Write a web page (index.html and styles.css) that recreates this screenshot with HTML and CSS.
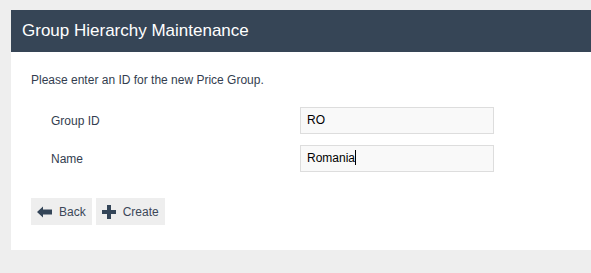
FILE: index.html
```html
<!DOCTYPE html>
<html>
<head>
<meta charset="utf-8">
<link rel="stylesheet" href="styles.css">
</head>
<body>
<div class="panel">
  <div class="panel-header">Group Hierarchy Maintenance</div>
  <div class="panel-body">
    <p class="intro">Please enter an ID for the new Price Group.</p>
    <div class="form">
      <div class="row">
        <label class="label">Group ID</label>
        <div class="field">RO</div>
      </div>
      <div class="row">
        <label class="label">Name</label>
        <div class="field">Romania<span class="caret"></span></div>
      </div>
    </div>
    <div class="buttons">
      <button class="btn">
        <svg class="icon" width="15" height="14" viewBox="0 0 15 14"><path d="M0 7 L6 1.5 L6 4.5 L15 4.5 L15 9.5 L6 9.5 L6 12.5 Z" fill="#344558"/></svg>
        <span>Back</span>
      </button>
      <button class="btn">
        <svg class="icon" width="14" height="14" viewBox="0 0 14 14"><path d="M5 0 H9 V5 H14 V9 H9 V14 H5 V9 H0 V5 H5 Z" fill="#344558"/></svg>
        <span>Create</span>
      </button>
    </div>
  </div>
</div>
</body>
</html>
```
FILE: styles.css
```css
html, body {
  margin: 0;
  padding: 0;
  background: #eeeeee;
  font-family: "Liberation Sans", Arial, sans-serif;
}
body {
  padding: 10px 0 0 11px;
}
.panel {
  background: #ffffff;
  height: 240px;
}
.panel-header {
  background: #364556;
  color: #ffffff;
  font-size: 17px;
  height: 42px;
  line-height: 41px;
  padding-left: 11px;
}
.panel-body {
  padding: 0 20px;
}
.intro {
  margin: 0;
  padding-top: 21px;
  font-size: 12px;
  line-height: 14px;
  color: #333d4f;
}
.form {
  padding-top: 20px;
  display: flex;
  flex-direction: column;
  gap: 11px;
}
.row {
  display: flex;
  align-items: center;
}
.label {
  width: 249px;
  padding-left: 20px;
  font-size: 12px;
  color: #333d4f;
}
.field {
  width: 186px;
  height: 25px;
  line-height: 25px;
  padding-left: 6px;
  background: #f9f9f9;
  border: 1px solid #dddddd;
  font-size: 12px;
  color: #000;
}
.caret {
  display: inline-block;
  width: 1px;
  height: 15px;
  background: #000;
  vertical-align: -3px;
}
.buttons {
  display: flex;
  gap: 4px;
  padding-top: 26px;
}
.btn {
  display: flex;
  align-items: center;
  gap: 7px;
  height: 27px;
  padding: 0 6px 0 6px;
  border: none;
  background: #eeeeee;
  font-family: "Liberation Sans", Arial, sans-serif;
  font-size: 12px;
  color: #3b4758;
}
```
